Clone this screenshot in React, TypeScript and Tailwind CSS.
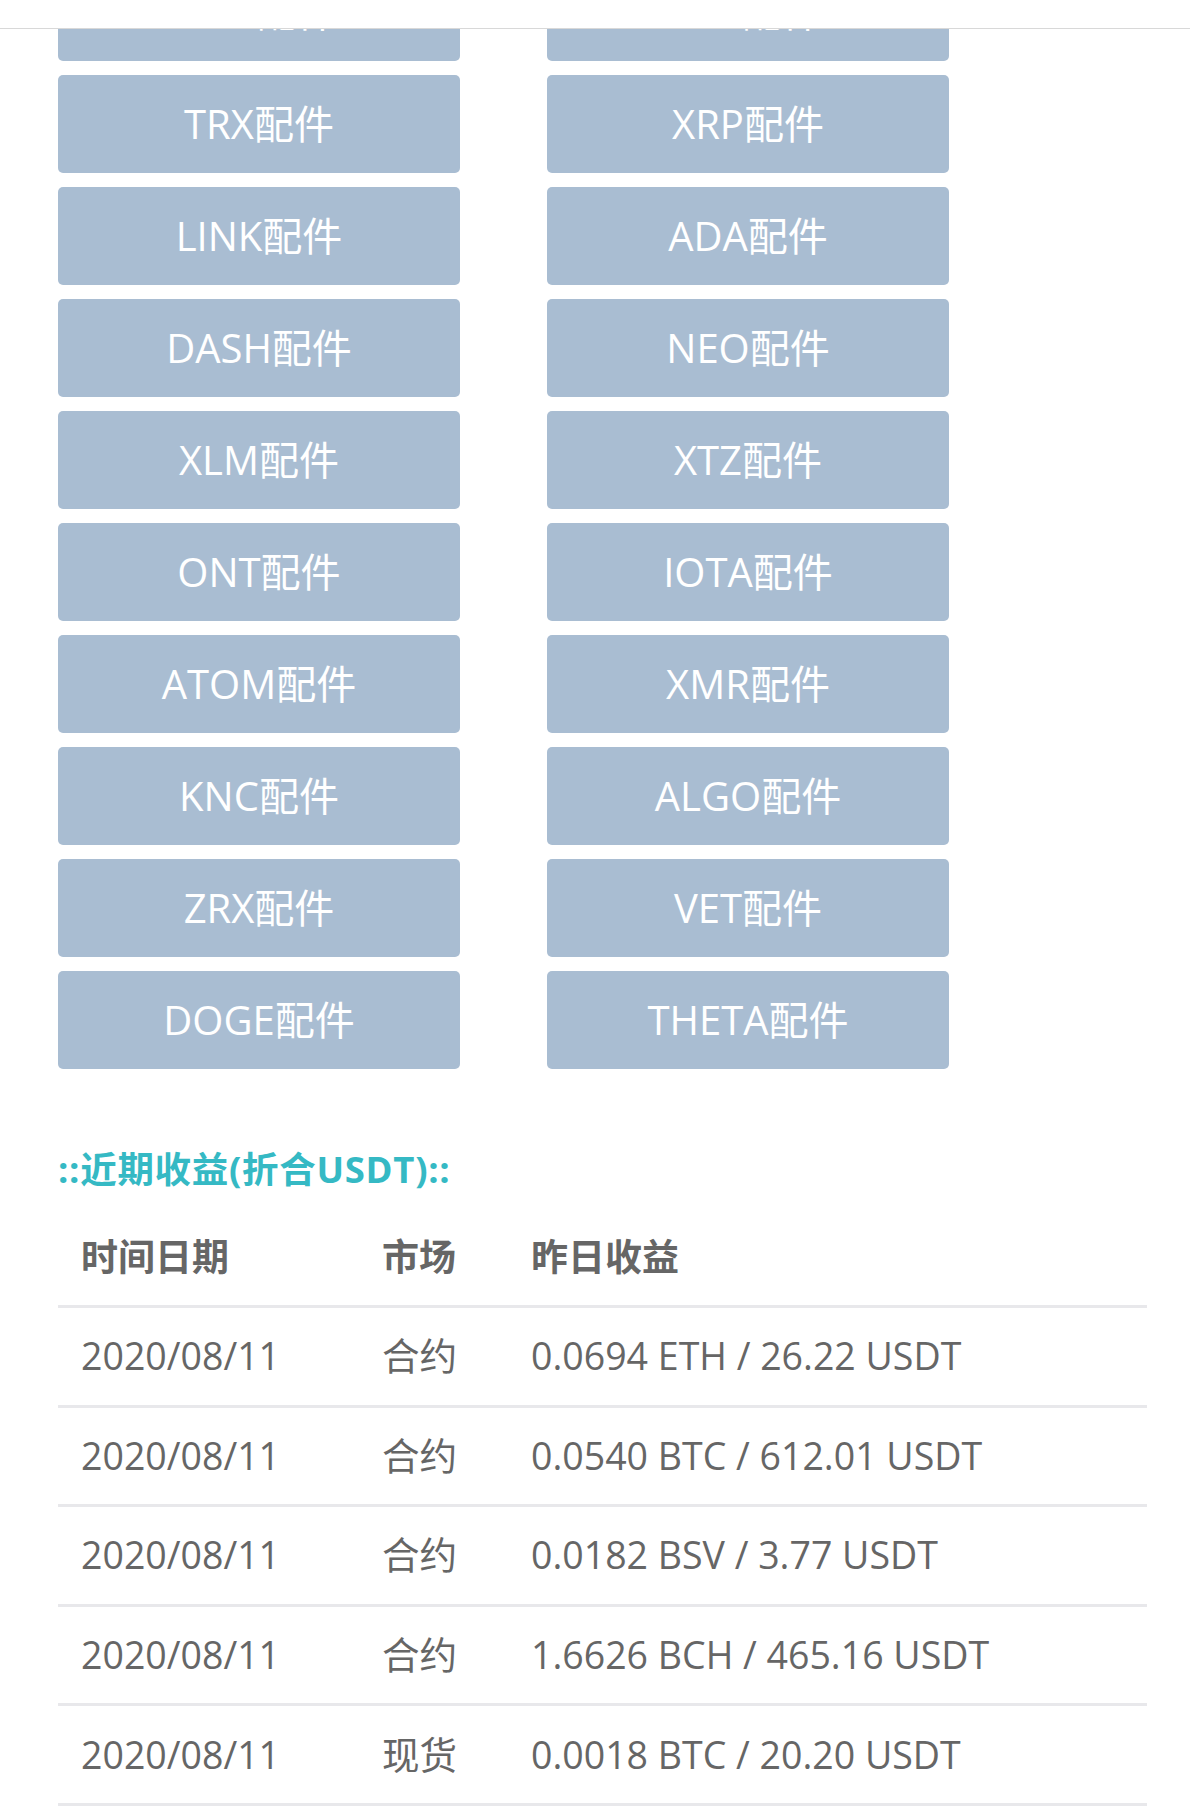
import React from "react"

const BUTTONS = [
  ["EOS配件", "LTC配件"],
  ["TRX配件", "XRP配件"],
  ["LINK配件", "ADA配件"],
  ["DASH配件", "NEO配件"],
  ["XLM配件", "XTZ配件"],
  ["ONT配件", "IOTA配件"],
  ["ATOM配件", "XMR配件"],
  ["KNC配件", "ALGO配件"],
  ["ZRX配件", "VET配件"],
  ["DOGE配件", "THETA配件"],
]

const ROWS = [
  { date: "2020/08/11", market: "合约", income: "0.0694 ETH / 26.22 USDT" },
  { date: "2020/08/11", market: "合约", income: "0.0540 BTC / 612.01 USDT" },
  { date: "2020/08/11", market: "合约", income: "0.0182 BSV / 3.77 USDT" },
  { date: "2020/08/11", market: "合约", income: "1.6626 BCH / 465.16 USDT" },
  { date: "2020/08/11", market: "现货", income: "0.0018 BTC / 20.20 USDT" },
]

const font = "font-['Open_Sans','Noto_Sans_CJK_SC',sans-serif]"

export default function App() {
  return (
    <div className={`relative h-[1812px] w-[1190px] overflow-hidden bg-white ${font}`}>
      {/* top bar, page is scrolled under it */}
      <div className="absolute inset-x-0 top-0 z-10 h-[29px] border-b border-[#d8d8d8] bg-white" />

      <div className="-mt-[37px] pl-[58px] pr-[43px]">
        {/* accessory buttons */}
        <div className="grid w-[891px] grid-cols-[402px_402px] gap-x-[87px] gap-y-[14px]">
          {BUTTONS.flat().map((label) => (
            <button
              key={label}
              className="flex h-[98px] items-center justify-center rounded-[5px] bg-[#a9bdd2] text-[40px] text-white"
            >
              {label}
            </button>
          ))}
        </div>

        {/* recent income */}
        <h2 className="mt-[80px] text-[36.5px] leading-[41px] font-bold tracking-[0.7px] text-[#35b9c4]">
          ::近期收益(折合USDT)::
        </h2>

        <div className="mt-[19px]">
          <div className="grid h-[99px] grid-cols-[301px_149px_1fr] items-center border-b-[3px] border-[#e8e8eb] pl-[23px] text-[37px] font-bold text-[#666]">
            <span>时间日期</span>
            <span>市场</span>
            <span>昨日收益</span>
          </div>
          {ROWS.map((r, i) => (
            <div
              key={i}
              className="grid h-[99.6px] grid-cols-[301px_149px_1fr] items-center border-b-[3px] border-[#e8e8eb] pl-[23px] text-[37.5px] text-[#666]"
            >
              <span>{r.date}</span>
              <span>{r.market}</span>
              <span>{r.income}</span>
            </div>
          ))}
        </div>
      </div>
    </div>
  )
}
